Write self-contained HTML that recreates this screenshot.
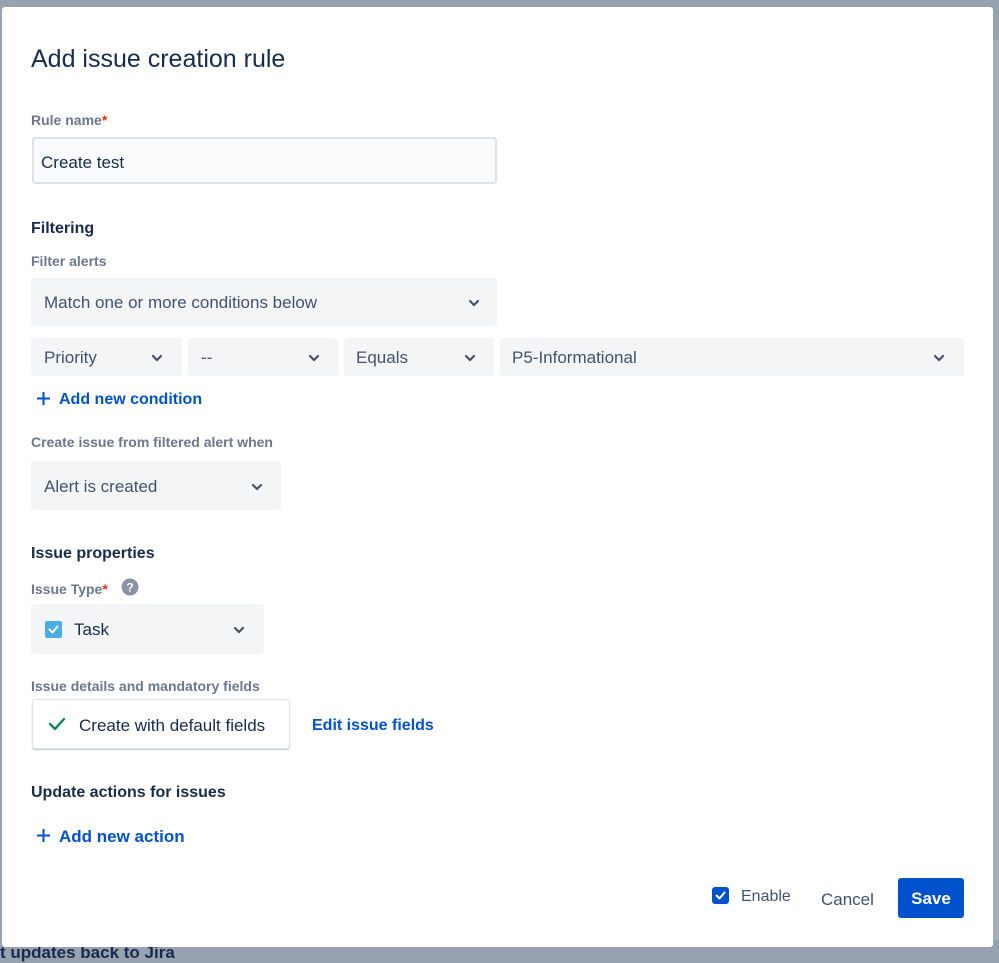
<!DOCTYPE html>
<html><head><meta charset="utf-8"><style>
*{margin:0;padding:0;box-sizing:border-box}
body{width:999px;height:953px;overflow:hidden;background:#98a1b0;font-family:"Liberation Sans",sans-serif;color:#172b4d;position:relative}
.a{position:absolute;white-space:nowrap}
.dlg{position:absolute;left:2px;top:7px;width:991px;height:940px;background:#fff;border-radius:3px}
.lbl{font-size:14px;color:#6b778c;font-weight:bold;line-height:16px}
.req{color:#de350b}
.h{font-size:16px;font-weight:bold;line-height:20px}
.sel{position:absolute;background:#f4f5f7;border-radius:3px;font-size:17px;color:#42526e}
.sel span{position:absolute;top:50%;transform:translateY(-44%)}
.chev{position:absolute;top:50%;margin-top:-3px;width:12px;height:8px}
.link{color:#0052cc;font-size:16px;font-weight:bold}
</style></head><body>
<div class="a" style="left:993px;top:40px;width:6px;height:900px;background:#a6adba"></div>
<div class="a" style="left:0;top:943px;font-size:17px;color:#172b4d;font-weight:bold">t updates back to Jira</div>
<div class="dlg"></div>

<div class="a" style="left:31px;top:44px;font-size:25px;line-height:30px;color:#172b4d">Add issue creation rule</div>

<div class="a lbl" style="left:31px;top:112px">Rule name<span class="req">*</span></div>
<div class="a" style="left:32px;top:137px;width:465px;height:47px;background:#fafbfc;border:2px solid #dfe1e6;border-radius:3px"></div>
<div class="a" style="left:41px;top:153px;font-size:17px;line-height:20px">Create test</div>

<div class="a h" style="left:31px;top:219px">Filtering</div>
<div class="a lbl" style="left:31px;top:253px">Filter alerts</div>

<div class="sel" style="left:31px;top:278px;width:466px;height:48px"><span style="left:13px">Match one or more conditions below</span>
<svg class="chev" style="left:437px" viewBox="0 0 12 8"><path d="M2 2l4 4 4-4" stroke="#42526e" stroke-width="2.2" fill="none" stroke-linecap="round"/></svg></div>

<div class="sel" style="left:31px;top:338px;width:151px;height:38px"><span style="left:13px">Priority</span>
<svg class="chev" style="left:120px" viewBox="0 0 12 8"><path d="M2 2l4 4 4-4" stroke="#42526e" stroke-width="2.2" fill="none" stroke-linecap="round"/></svg></div>
<div class="sel" style="left:188px;top:338px;width:150px;height:38px"><span style="left:13px">--</span>
<svg class="chev" style="left:120px" viewBox="0 0 12 8"><path d="M2 2l4 4 4-4" stroke="#42526e" stroke-width="2.2" fill="none" stroke-linecap="round"/></svg></div>
<div class="sel" style="left:344px;top:338px;width:150px;height:38px"><span style="left:12px">Equals</span>
<svg class="chev" style="left:120px" viewBox="0 0 12 8"><path d="M2 2l4 4 4-4" stroke="#42526e" stroke-width="2.2" fill="none" stroke-linecap="round"/></svg></div>
<div class="sel" style="left:500px;top:338px;width:464px;height:38px"><span style="left:12px">P5-Informational</span>
<svg class="chev" style="left:433px" viewBox="0 0 12 8"><path d="M2 2l4 4 4-4" stroke="#42526e" stroke-width="2.2" fill="none" stroke-linecap="round"/></svg></div>

<svg class="a" style="left:36px;top:391px" width="15" height="15" viewBox="0 0 15 15"><path d="M7.5 1v13M1 7.5h13" stroke="#0052cc" stroke-width="2"/></svg>
<div class="a link" style="left:59px;top:390px;line-height:20px">Add new condition</div>

<div class="a lbl" style="left:31px;top:434px">Create issue from filtered alert when</div>
<div class="sel" style="left:31px;top:461px;width:250px;height:49px"><span style="left:13px">Alert is created</span>
<svg class="chev" style="left:220px" viewBox="0 0 12 8"><path d="M2 2l4 4 4-4" stroke="#42526e" stroke-width="2.2" fill="none" stroke-linecap="round"/></svg></div>

<div class="a h" style="left:31px;top:544px">Issue properties</div>
<div class="a lbl" style="left:31px;top:581px">Issue Type<span class="req">*</span></div>
<svg class="a" style="left:121px;top:578px" width="18" height="18" viewBox="0 0 18 18"><circle cx="9" cy="9" r="8.5" fill="#8993a4"/><text x="9" y="13.5" text-anchor="middle" font-size="12" font-weight="bold" fill="#fff" font-family="Liberation Sans">?</text></svg>

<div class="sel" style="left:31px;top:604px;width:233px;height:50px"><span style="left:43px;color:#172b4d">Task</span>
<svg class="chev" style="left:202px" viewBox="0 0 12 8"><path d="M2 2l4 4 4-4" stroke="#42526e" stroke-width="2.2" fill="none" stroke-linecap="round"/></svg></div>
<svg class="a" style="left:45px;top:621px" width="17" height="17" viewBox="0 0 17 17"><rect width="17" height="17" rx="2" fill="#4bade8"/><path d="M4.5 8.5l3 3 5-6" stroke="#fff" stroke-width="2" fill="none" stroke-linecap="round" stroke-linejoin="round"/></svg>

<div class="a lbl" style="left:31px;top:678px">Issue details and mandatory fields</div>
<div class="a" style="left:32px;top:699px;width:258px;height:50px;background:#fff;border:1px solid #dfe1e6;border-radius:3px;box-shadow:0 1px 1px rgba(9,30,66,.25)"></div>
<svg class="a" style="left:48px;top:717px" width="18" height="14" viewBox="0 0 18 14"><path d="M2 7l5 5 9-10" stroke="#00875a" stroke-width="2.4" fill="none" stroke-linecap="round" stroke-linejoin="round"/></svg>
<div class="a" style="left:79px;top:716px;font-size:17px;line-height:20px">Create with default fields</div>
<div class="a link" style="left:312px;top:716px;line-height:20px">Edit issue fields</div>

<div class="a h" style="left:31px;top:783px">Update actions for issues</div>
<svg class="a" style="left:36px;top:828px" width="15" height="15" viewBox="0 0 15 15"><path d="M7.5 1v13M1 7.5h13" stroke="#0052cc" stroke-width="2"/></svg>
<div class="a link" style="left:59px;top:827px;line-height:20px;font-size:17px">Add new action</div>

<svg class="a" style="left:712px;top:887px" width="17" height="17" viewBox="0 0 17 17"><rect width="17" height="17" rx="3" fill="#0052cc"/><path d="M4.5 8.5l3 3 5-6" stroke="#fff" stroke-width="2" fill="none" stroke-linecap="round" stroke-linejoin="round"/></svg>
<div class="a" style="left:741px;top:887px;font-size:16px;line-height:20px;color:#42526e">Enable</div>
<div class="a" style="left:821px;top:890px;font-size:17px;line-height:20px;color:#42526e">Cancel</div>
<div class="a" style="left:898px;top:878px;width:66px;height:40px;background:#0052cc;border-radius:3px;color:#fff;font-size:17px;font-weight:bold;line-height:42px;text-align:center">Save</div>
</body></html>
